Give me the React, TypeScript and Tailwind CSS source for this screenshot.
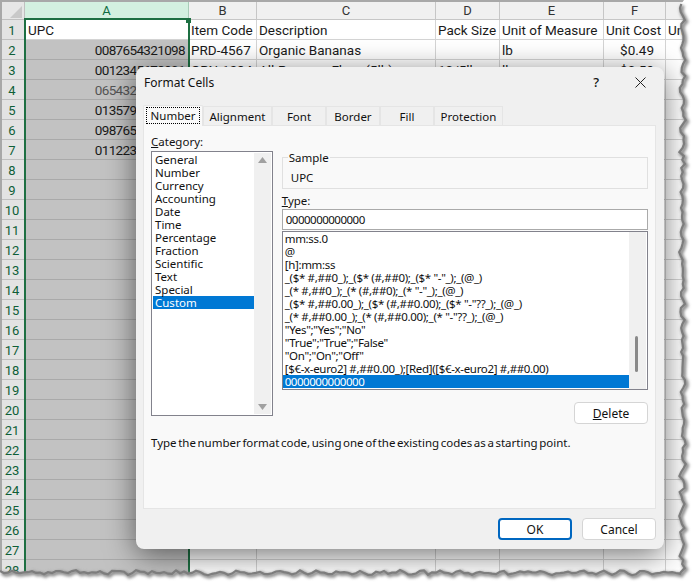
const cols = ['A', 'B', 'C', 'D', 'E', 'F', ''];

const rows: { upc?: string; cells: string[]; faded?: boolean }[] = [
  { cells: ['Item Code', 'Description', 'Pack Size', 'Unit of Measure', 'Unit Cost', 'Un'] },
  { upc: '0087654321098', cells: ['PRD-4567', 'Organic Bananas', '', 'lb', '$0.49', ''] },
  { upc: '0012345678901', cells: ['GRN-1234', 'All-Purpose Flour (5lb)', '10/5lb', 'lb', '$0.59', ''] },
  { upc: '0654321098765', cells: [], faded: true },
  { upc: '0135790246801', cells: [] },
  { upc: '0987654321012', cells: [] },
  { upc: '0112233445566', cells: [] },
];

const categories = ['General', 'Number', 'Currency', 'Accounting', 'Date', 'Time', 'Percentage', 'Fraction', 'Scientific', 'Text', 'Special', 'Custom'];

const formats = [
  'mm:ss.0',
  '@',
  '[h]:mm:ss',
  '_($* #,##0_);_($* (#,##0);_($* "-"_);_(@_)',
  '_(* #,##0_);_(* (#,##0);_(* "-"_);_(@_)',
  '_($* #,##0.00_);_($* (#,##0.00);_($* "-"??_);_(@_)',
  '_(* #,##0.00_);_(* (#,##0.00);_(* "-"??_);_(@_)',
  '"Yes";"Yes";"No"',
  '"True";"True";"False"',
  '"On";"On";"Off"',
  '[$€-x-euro2] #,##0.00_);[Red]([$€-x-euro2] #,##0.00)',
  '0000000000000',
];

const tabs = [
  { label: 'Alignment', w: 'w-[69px]' },
  { label: 'Font', w: 'w-[54px]' },
  { label: 'Border', w: 'w-[54px]' },
  { label: 'Fill', w: 'w-[54px]' },
  { label: 'Protection', w: 'w-[69px]' },
];

// torn paper edge along the bottom and right side
function tornEdge() {
  const pts: string[] = [];
  const noise = (i: number) => {
    const v = Math.sin(i * 12.9898) * 43758.5453;
    return v - Math.floor(v);
  };
  const jitter = (i: number) => (noise(i) - 0.5) * 3.2 + Math.sin(i * 0.31) * 1.2;
  for (let x = 0; x < 682; x += 4) pts.push(`${x},${(572.5 + jitter(x)).toFixed(1)}`);
  for (let y = 572; y > 0; y -= 4) pts.push(`${(682.5 + jitter(y + 1000) * 1.2).toFixed(1)},${y}`);
  return pts;
}

function TornOverlay() {
  const pts = tornEdge();
  const line = 'M' + pts.join(' L');
  return (
    <svg className="absolute left-0 top-0" width="697" height="587" viewBox="0 0 697 587">
      <defs>
        <filter id="tornShadow" x="-5%" y="-5%" width="110%" height="110%">
          <feGaussianBlur stdDeviation="1.6" />
        </filter>
      </defs>
      <path d={`${line} L684,0 L697,0 L697,587 L0,587 Z`} fill="#ffffff" />
      <path d={line} fill="none" stroke="#8c8c8c" strokeWidth="4" transform="translate(1.5 1.5)" filter="url(#tornShadow)" />
      <path d={line} fill="none" stroke="#7d7d7d" strokeWidth="2.2" />
    </svg>
  );
}

function ScrollTrack({ children, className }: { children?: React.ReactNode; className: string }) {
  return (
    <div className={`relative flex w-[17px] flex-col items-center justify-between bg-[#f0f0f0] py-[4px] ${className}`}>
      {children}
    </div>
  );
}

function Button({ label, hot, primary, className }: { label: string; hot?: string; primary?: boolean; className?: string }) {
  return (
    <div
      className={`flex h-[22px] w-[74px] items-center justify-center rounded-[4px] bg-white text-[12px] text-[#111] ${
        primary ? 'border-2 border-[#0067c0]' : 'border border-[#d5d5d5]'
      } ${className ?? ''}`}
    >
      {hot ? <span className="underline">{hot}</span> : null}
      {label}
    </div>
  );
}

function FormatDialog() {
  return (
    <div className="absolute left-[136px] top-[67px] flex h-[482px] w-[528px] flex-col rounded-[8px] bg-[#f0f0f0] font-['Noto_Sans',sans-serif] text-[11.5px] leading-[13px] text-[#111] shadow-[0_6px_30px_rgba(0,0,0,0.55)]">
      <div className="flex h-[30px] items-center pl-[8px] pr-[18px] text-[12px]">
        <span className="flex-1">Format Cells</span>
        <span className="mr-[36px] text-[13px] font-medium">?</span>
        <svg width="11" height="11" viewBox="0 0 11 11" className="stroke-[#222]">
          <path d="M0.5 0.5 L10.5 10.5 M10.5 0.5 L0.5 10.5" strokeWidth="1" fill="none" />
        </svg>
      </div>

      <div className="flex h-[28px] items-end pl-[7px]">
        <div className="relative z-10 mb-[-1px] flex h-[21px] w-[60px] items-center justify-center rounded-t-[2px] border border-b-0 border-[#e5e5e5] bg-[#f9f9f9] pb-[2px]">
          <span className="border border-dotted border-black px-[4px] py-[1px]">Number</span>
        </div>
        {tabs.map((tab) => (
          <div
            key={tab.label}
            className={`flex h-[19px] items-center justify-center border border-b-0 border-[#e5e5e5] bg-[#f0f0f0] ${tab.w}`}
          >
            {tab.label}
          </div>
        ))}
      </div>

      <div className="mx-[7px] flex h-[384px] w-[513px] flex-col border border-[#e5e5e5] bg-[#f9f9f9] px-[7px] pt-[10px]">
        <div className="flex gap-[9px]">
          <div className="flex w-[122px] flex-col">
            <div className="h-[15px] -mt-[1px] mb-[1px]">
              <span className="underline">C</span>ategory:
            </div>
            <div className="flex h-[265px] border border-[#82828c] bg-white p-[1px]">
              <div className="flex-1">
                {categories.map((c) => (
                  <div key={c} className={`h-[13px] pl-[2px] ${c === 'Custom' ? 'bg-[#0078d4] text-white' : ''}`}>
                    {c}
                  </div>
                ))}
              </div>
              <ScrollTrack className="">
                <svg width="9" height="6" viewBox="0 0 9 6" className="fill-[#a0a0a0]"><path d="M4.5 0 L9 6 L0 6 Z" /></svg>
                <svg width="9" height="6" viewBox="0 0 9 6" className="fill-[#a0a0a0]"><path d="M0 0 L9 0 L4.5 6 Z" /></svg>
              </ScrollTrack>
            </div>
          </div>

          <div className="flex w-[367px] flex-col pt-[21px]">
            <div className="relative h-[32px] border border-[#e0e0e0] pl-[8px] pt-[13px]">
              <span className="absolute left-[5px] top-[-7px] bg-[#f9f9f9] px-[1px]">Sample</span>
              UPC
            </div>
            <div className="mt-[5px] h-[15px]">
              <span className="underline">T</span>ype:
            </div>
            <div className="flex h-[21px] items-center border border-[#aaa] bg-white pl-[3px] tracking-[-0.5px]">0000000000000</div>
            <div className="mt-[1px] flex h-[159px] border border-[#82828c] bg-white">
              <div className="flex-1">
                {formats.map((f, i) => (
                  <div
                    key={f}
                    className={`h-[13px] whitespace-nowrap pl-[2px] ${
                      i === formats.length - 1 ? 'bg-[#0078d4] tracking-[-0.46px] text-white' : 'tracking-[-0.33px]'
                    }`}
                  >
                    {f}
                  </div>
                ))}
              </div>
              <ScrollTrack className="mr-[1px]">
                <div className="absolute left-[6px] top-[104px] h-[36px] w-[3px] rounded-full bg-[#8a8a8a]" />
              </ScrollTrack>
            </div>
            <Button label="elete" hot="D" className="mt-[12px] self-end" />
          </div>
        </div>
        <div className="mt-[12px] [word-spacing:-1.4px]">Type the number format code, using one of the existing codes as a starting point.</div>
      </div>

      <div className="mt-[9px] flex justify-end gap-[10px] pr-[8px]">
        <Button label="OK" primary />
        <Button label="Cancel" />
      </div>
    </div>
  );
}

export default function App() {
  const rowNumbers = Array.from({ length: 28 }, (_, i) => i + 1);
  return (
    <div className="relative h-[587px] w-[697px] overflow-hidden bg-[#a8a8a8] pl-[2px] pt-[2px] font-['Roboto',sans-serif] text-[13.5px] text-[#1a1a1a]">
      <div className="grid grid-cols-[23px_164px_68px_179px_64px_104px_62px_40px] auto-rows-[20px] grid-rows-[18px] bg-white">
        <div className="relative border-b border-r border-[#c0c0c0] bg-[#e6e6e6]">
          <div className="absolute bottom-[1px] right-[2px] h-0 w-0 border-b-[12px] border-l-[12px] border-b-[#c8c8c8] border-l-transparent" />
        </div>
        {cols.map((c) => (
          <div
            key={c}
            className={`flex items-center justify-center border-b border-r text-[13px] ${
              c === 'A'
                ? 'border-[#a8cdb8] bg-[#d3f0e0] text-[#0f6b3f]'
                : 'border-[#c6c6c6] bg-[#f0f0f0] text-[#333]'
            }`}
          >
            {c}
          </div>
        ))}
        {rowNumbers.map((n) => {
          const row = rows[n - 1];
          return (
            <div key={n} className="contents">
              <div className="flex items-center justify-center border-b border-r border-[#c0c0c0] bg-[#e3e3e3] pr-[2px] pt-[2px] text-[13px] text-[#0f5f38]">
                {n}
              </div>
              <div
                className={`flex items-center whitespace-nowrap border-b pl-[3px] pr-[4px] pt-[2px] ${
                  n === 1 ? 'border-[#d4d4d4] bg-white' : 'justify-end border-[#a9a9a9] bg-[#c2c2c2] tracking-[-0.65px]'
                } ${row?.faded ? 'text-[#555]' : ''}`}
              >
                {n === 1 ? 'UPC' : row?.upc}
              </div>
              {[0, 1, 2, 3, 4, 5].map((i) => (
                <div
                  key={i}
                  className={`flex items-center overflow-hidden whitespace-nowrap border-b border-r border-[#d4d4d4] px-[2px] pt-[2px] ${
                    i === 4 && (n === 2 || n === 3) ? 'justify-end pr-[11px]' : ''
                  }`}
                >
                  {row?.cells[i]}
                </div>
              ))}
            </div>
          );
        })}
      </div>

      {/* selection outline of column A */}
      <div className="absolute left-[24px] top-[18px] h-[556px] w-[166px] border-x-2 border-t-2 border-[#1d6f42]" />
      <div className="absolute left-[186px] top-[18px] h-[5px] w-[5px] bg-[#1d6f42]" />

      <FormatDialog />
      <TornOverlay />
    </div>
  );
}
